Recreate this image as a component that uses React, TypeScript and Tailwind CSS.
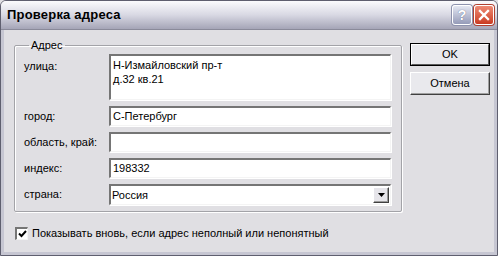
import React from 'react';

const font = { fontFamily: '"Liberation Sans", Arial, sans-serif' };

const sunken =
  'bg-white border-t-2 border-l-2 border-b border-r border-t-[#757575] border-l-[#757575] border-b-[#f4f4f4] border-r-[#f4f4f4] shadow-[1px_1px_0_#ffffff]';

function Field({ value }: { value?: string }) {
  return (
    <div className={`${sunken} h-[20px] flex items-center pl-[2px] text-[11px] text-black`}>
      {value}
    </div>
  );
}

export default function App() {
  return (
    <div style={font} className="w-[498px] h-[256px] bg-[#e0dfe3] text-[11px] text-black select-none">
      <div className="w-full h-full flex flex-col border border-[#5f5f6f] rounded-t-[6px] overflow-hidden">
        {/* title bar */}
        <div className="h-[29px] shrink-0 flex items-center pl-[6px] pr-[3px] bg-gradient-to-b from-[#fbfbfd] via-[#d8d8e3] to-[#a5a5b7] border-b border-[#8a8a9a]">
          <span className="text-[13px] font-bold text-black tracking-[0.2px]">Проверка адреса</span>
          <div className="ml-auto flex gap-[2px]">
            <div className="w-[20px] h-[20px] rounded-[3px] border border-white bg-gradient-to-b from-[#e4e7f2] to-[#959bb8] flex items-center justify-center shadow-[0_0_0_1px_#8d92ad]">
              <span className="text-white font-bold text-[14px] leading-none [text-shadow:0_0_1px_#555a78]">?</span>
            </div>
            <div className="w-[20px] h-[20px] rounded-[3px] border border-white bg-gradient-to-b from-[#ee8a74] to-[#c9391f] flex items-center justify-center shadow-[0_0_0_1px_#b04030]">
              <svg width="12" height="12" viewBox="0 0 12 12">
                <path d="M2 2 L10 10 M10 2 L2 10" stroke="#fff" strokeWidth="2.3" strokeLinecap="square" />
              </svg>
            </div>
          </div>
        </div>

        {/* body */}
        <div className="flex-1 flex flex-col border-x-[3px] border-b-[3px] border-[#c6c6d2] pl-[10px] pt-[9px]">
          <div className="flex items-start">
            <fieldset className="w-[387px] border border-[#a3a3a8] shadow-[inset_1px_1px_0_#ffffff,1px_1px_0_#ffffff] rounded-[2px] pl-[9px] pr-[10px] pt-[2px] pb-[6px]">
              <legend className="ml-[5px] px-[2px] text-[11px] leading-[13px]">Адрес</legend>
              <div className="grid grid-cols-[85px_282px] gap-y-[6px]">
                <div className="pt-[4px]">улица:</div>
                <div className={`${sunken} h-[46px] pl-[2px] pt-[2px] leading-[14px]`}>
                  <div>Н-Измайловский пр-т</div>
                  <div>д.32 кв.21</div>
                </div>
                <div className="self-center">город:</div>
                <Field value="С-Петербург" />
                <div className="self-center">область, край:</div>
                <Field />
                <div className="self-center">индекс:</div>
                <Field value="198332" />
                <div className="self-center">страна:</div>
                <div className={`${sunken} h-[21px] flex items-center pl-[1px] pr-[1px]`}>
                  <span>Россия</span>
                  <div className="ml-auto w-[16px] h-[16px] bg-[#e6e5ea] border border-t-white border-l-white border-b-[#404040] border-r-[#404040] shadow-[inset_-1px_-1px_0_#9a9a9a] flex items-center justify-center">
                    <svg width="7" height="4" viewBox="0 0 7 4">
                      <path d="M0 0 H7 L3.5 4 Z" fill="#000" />
                    </svg>
                  </div>
                </div>
              </div>
            </fieldset>

            <div className="ml-[8px] mt-[4px] flex flex-col gap-[6px]">
              <div className="w-[80px] h-[23px] border border-black">
                <div className="w-full h-full bg-[#e9e9ed] border border-t-white border-l-white border-b-[#5a5a5a] border-r-[#5a5a5a] flex items-center justify-center">
                  OK
                </div>
              </div>
              <div className="w-[80px] h-[23px] bg-[#e9e9ed] border border-t-white border-l-white border-b-[#404040] border-r-[#404040] shadow-[inset_-1px_-1px_0_#a0a0a0] flex items-center justify-center">
                Отмена
              </div>
            </div>
          </div>

          <div className="flex items-center mt-[13px] ml-[1px]">
            <div className="w-[13px] h-[13px] bg-white border-t-2 border-l-2 border-b border-r border-t-[#757575] border-l-[#757575] border-b-[#f4f4f4] border-r-[#f4f4f4] flex items-center justify-center">
              <svg width="9" height="8" viewBox="0 0 9 8">
                <path d="M1 3.5 L3.5 6 L8 1" stroke="#000" strokeWidth="2" fill="none" />
              </svg>
            </div>
            <span className="ml-[4px]">Показывать вновь, если адрес неполный или непонятный</span>
          </div>
        </div>
      </div>
    </div>
  );
}
